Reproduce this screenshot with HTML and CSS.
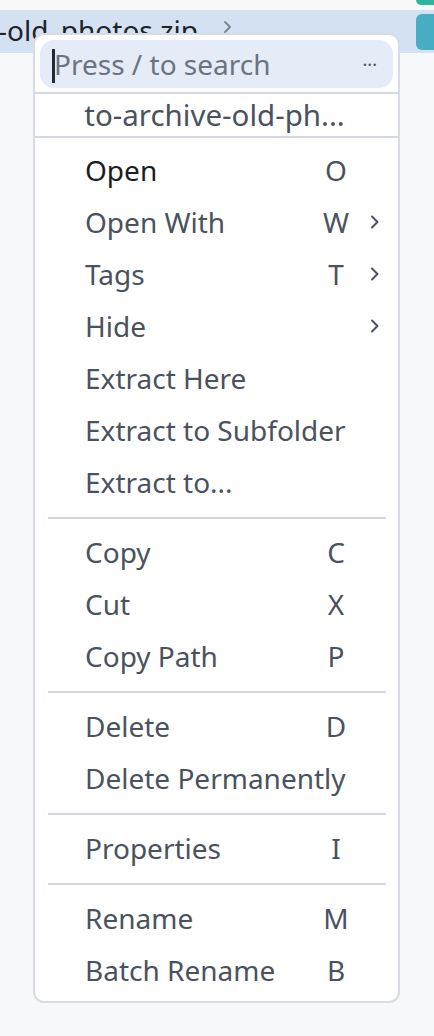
FILE: index.html
```html
<!DOCTYPE html>
<html lang="en">
<head>
    <meta charset="UTF-8">
    <meta name="viewport" content="width=device-width, initial-scale=1.0">
    <title>Context menu</title>
    <link rel="stylesheet" href="styles.css">
</head>
<body>

<div class="file-list">
    <div class="file-row prev">
        <span class="badge green"></span>
    </div>
    <div class="file-row selected">
        <span class="file-name">-old_photos.zip</span>
        <svg class="row-chev" width="12" height="14" viewBox="0 0 12 14"><path d="M3 2l5 5-5 5" fill="none" stroke="#7a828e" stroke-width="1.8" stroke-linecap="round" stroke-linejoin="round"/></svg>
        <span class="badge teal"></span>
    </div>
</div>

<div class="menu">
    <div class="search">
        <span class="cursor"></span>
        <span class="placeholder">Press / to search</span>
        <span class="more">···</span>
    </div>
    <div class="rule full"></div>
    <div class="menu-title">to-archive-old-ph...</div>
    <div class="rule full last"></div>

    <div class="item primary"><span class="label">Open</span><span class="key">O</span><span class="chev"></span></div>
    <div class="item"><span class="label">Open With</span><span class="key">W</span><span class="chev"><svg width="12" height="16" viewBox="0 0 12 16"><path d="M3 2.5l5.5 5.5-5.5 5.5" fill="none" stroke="#4a5260" stroke-width="2" stroke-linecap="round" stroke-linejoin="round"/></svg></span></div>
    <div class="item"><span class="label">Tags</span><span class="key">T</span><span class="chev"><svg width="12" height="16" viewBox="0 0 12 16"><path d="M3 2.5l5.5 5.5-5.5 5.5" fill="none" stroke="#4a5260" stroke-width="2" stroke-linecap="round" stroke-linejoin="round"/></svg></span></div>
    <div class="item"><span class="label">Hide</span><span class="key"></span><span class="chev"><svg width="12" height="16" viewBox="0 0 12 16"><path d="M3 2.5l5.5 5.5-5.5 5.5" fill="none" stroke="#4a5260" stroke-width="2" stroke-linecap="round" stroke-linejoin="round"/></svg></span></div>
    <div class="item"><span class="label">Extract Here</span><span class="key"></span><span class="chev"></span></div>
    <div class="item"><span class="label">Extract to Subfolder</span><span class="key"></span><span class="chev"></span></div>
    <div class="item"><span class="label">Extract to...</span><span class="key"></span><span class="chev"></span></div>
    <div class="rule"></div>

    <div class="item"><span class="label">Copy</span><span class="key">C</span><span class="chev"></span></div>
    <div class="item"><span class="label">Cut</span><span class="key">X</span><span class="chev"></span></div>
    <div class="item"><span class="label">Copy Path</span><span class="key">P</span><span class="chev"></span></div>
    <div class="rule"></div>

    <div class="item"><span class="label">Delete</span><span class="key">D</span><span class="chev"></span></div>
    <div class="item"><span class="label">Delete Permanently</span><span class="key"></span><span class="chev"></span></div>
    <div class="rule"></div>

    <div class="item"><span class="label">Properties</span><span class="key">I</span><span class="chev"></span></div>
    <div class="rule"></div>

    <div class="item"><span class="label">Rename</span><span class="key">M</span><span class="chev"></span></div>
    <div class="item"><span class="label">Batch Rename</span><span class="key">B</span><span class="chev"></span></div>
</div>

</body>
</html>
```

FILE: styles.css
```css
body {
    font-family: 'Noto Sans', 'Open Sans', sans-serif;
    margin: 0;
    padding: 0;
    background: #f7f8fa;
    overflow: hidden;
    height: 1036px;
}
.file-list {
    display: flex;
    flex-direction: column;
}
.file-row {
    display: flex;
    align-items: center;
}
.file-row.prev {
    height: 10px;
    align-items: flex-start;
    justify-content: flex-end;
}
.file-row.selected {
    height: 43px;
    background-color: #d3e1f2;
}
.file-name {
    font-size: 28px;
    color: #1f2328;
    margin-left: -2px;
    line-height: 40px;
    margin-top: -4px;
    white-space: nowrap;
}
.row-chev {
    margin-left: 24px;
    margin-top: -10px;
}
.badge {
    display: block;
    width: 18px;
    margin-left: auto;
}
.badge.green {
    height: 5px;
    background-color: #2fb49c;
    border-radius: 0 0 0 6px;
}
.badge.teal {
    height: 36px;
    background-color: #47adc2;
    border-radius: 6px 0 0 6px;
}
/* menu floats over the file list */
.menu {
    position: absolute;
    left: 33px;
    top: 33px;
    width: 367px;
    box-sizing: border-box;
    background-color: #ffffff;
    border: 2px solid #d8dce2;
    border-radius: 11px;
    padding: 5px 0;
}
.search {
    display: flex;
    align-items: center;
    height: 48px;
    margin: 0 5px;
    background-color: #e5ecf8;
    border-radius: 14px;
    padding-left: 12px;
    padding-right: 16px;
}
.cursor {
    width: 3px;
    height: 34px;
    background-color: #1f2937;
    margin-top: 4px;
}
.placeholder {
    font-size: 28px;
    color: #6b7380;
    margin-left: -1px;
    line-height: 48px;
    white-space: nowrap;
}
.more {
    margin-left: auto;
    font-size: 18px;
    color: #4a5260;
}
.rule {
    height: 2px;
    background-color: #d6d9df;
    margin: 9px 12px 7px 13px;
}
.rule.full {
    margin: 4px 0 0 0;
}
.rule.full.last {
    margin: 0 0 6px 0;
}
.menu-title {
    height: 42px;
    line-height: 42px;
    text-align: center;
    font-size: 29.5px;
    color: #4a5260;
    padding-right: 4px;
    white-space: nowrap;
}
.item {
    display: grid;
    grid-template-columns: minmax(0, 1fr) 36px 22px;
    column-gap: 10px;
    align-items: center;
    height: 52px;
    padding-left: 50px;
    padding-right: 12px;
    font-size: 28px;
    color: #4a5260;
}
.item.primary {
    color: #1a1d21;
}
.item.primary .key {
    color: #4a5260;
}
.label {
    white-space: nowrap;
}
.key {
    text-align: center;
}
.chev {
    display: flex;
    justify-content: center;
    align-items: center;
}
```
